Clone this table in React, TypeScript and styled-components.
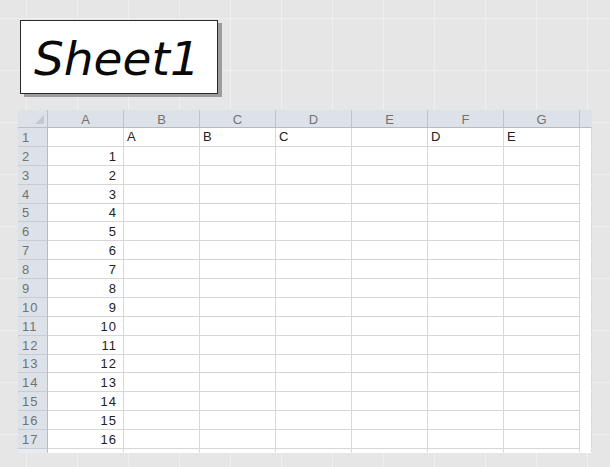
import React from 'react';
import styled, { createGlobalStyle } from 'styled-components';

const GlobalStyle = createGlobalStyle`
    html, body {
        margin: 0;
        padding: 0;
    }

    body {
        width: 610px;
        height: 467px;
        overflow: hidden;
        background-color: #e6e6e6;
        // faint desktop grid behind the sheet
        background-image:
            linear-gradient(to right, #efefef 1px, transparent 1px),
            linear-gradient(to bottom, #efefef 1px, transparent 1px);
        background-size: 51px 52px;
        background-position: 26px 18px;
        font-family: 'Liberation Sans', Arial, sans-serif;
    }
`;

const COLUMNS = ['A', 'B', 'C', 'D', 'E', 'F', 'G'];
const ROW_COUNT = 17;

// row 1 holds the letters, column A holds the numbers
const cellValue = (row: number, col: number) => {
    if (row === 1) {
        return ['', 'A', 'B', 'C', '', 'D', 'E'][col];
    }
    if (col === 0) {
        return String(row - 1);
    }
    return '';
};

export default function App() {
    return (
        <>
            <GlobalStyle />
            <Page>
                <TitleBox>
                    <TitleText>Sheet1</TitleText>
                </TitleBox>
                <Sheet>
                    <CornerCell>
                        <CornerMark />
                    </CornerCell>
                    {COLUMNS.map((c) => (
                        <ColumnHeader key={c}>{c}</ColumnHeader>
                    ))}
                    <ColumnHeader $partial />

                    {Array.from({ length: ROW_COUNT }, (_, i) => i + 1).map((row) => (
                        <React.Fragment key={row}>
                            <RowHeader>{row}</RowHeader>
                            {COLUMNS.map((c, col) => (
                                <Cell key={c} $numeric={col === 0 && row > 1}>
                                    {cellValue(row, col)}
                                </Cell>
                            ))}
                            <Cell $partial />
                        </React.Fragment>
                    ))}

                    <RowHeader $partial />
                    {COLUMNS.map((c) => (
                        <Cell key={c} $partial />
                    ))}
                    <Cell $partial />
                </Sheet>
            </Page>
        </>
    );
}

const Page = styled.div`
    padding: 20px 0 0 18px;
`;

const TitleBox = styled.div`
    margin-left: 2px;
    width: 198px;
    height: 74px;
    box-sizing: border-box;
    border: 1px solid #2a2a2a;
    background: #fff;
    box-shadow: 4px 3px 0 #9c9c9c;
    display: flex;
    align-items: center;
    padding-left: 13px;
`;

const TitleText = styled.span`
    font-family: 'DejaVu Sans', Verdana, sans-serif;
    font-style: italic;
    font-size: 47px;
    color: #0a0a0a;
    line-height: 1;
    padding-top: 2px;
`;

const Sheet = styled.div`
    margin-top: 16px;
    display: grid;
    grid-template-columns: 30px repeat(7, 76px) 12px;
    grid-template-rows: 18px repeat(17, 18.88px) 4px;
    width: max-content;
    font-size: 13px;
`;

const HeaderBase = styled.div`
    box-sizing: border-box;
    background: #dde2e8;
    color: #727272;
    font-size: 13px;
    line-height: 1;
`;

const CornerCell = styled(HeaderBase)`
    position: relative;
    border-right: 1px solid #b9c0c9;
    border-bottom: 1px solid #b9c0c9;
`;

const CornerMark = styled.div`
    position: absolute;
    right: 3px;
    bottom: 3px;
    width: 0;
    height: 0;
    border-left: 9px solid transparent;
    border-bottom: 9px solid #c3c8cf;
`;

const ColumnHeader = styled(HeaderBase)<{ $partial?: boolean }>`
    display: flex;
    align-items: center;
    justify-content: center;
    border-right: 1px solid ${(p) => (p.$partial ? 'transparent' : '#bcc3cc')};
    border-bottom: 1px solid #b4bbc4;
    padding-top: 2px;
`;

const RowHeader = styled(HeaderBase)<{ $partial?: boolean }>`
    display: flex;
    align-items: flex-end;
    padding: 0 0 2px 4px;
    letter-spacing: 1px;
    border-right: 1px solid #b4bbc4;
    border-bottom: 1px solid ${(p) => (p.$partial ? 'transparent' : '#c6ccd4')};
    background: ${(p) => (p.$partial ? '#e8ebef' : '#dde2e8')};
`;

const Cell = styled.div<{ $numeric?: boolean; $partial?: boolean }>`
    box-sizing: border-box;
    background: #fff;
    color: #222;
    line-height: 1;
    display: flex;
    align-items: flex-end;
    justify-content: ${(p) => (p.$numeric ? 'flex-end' : 'flex-start')};
    padding: ${(p) => (p.$numeric ? '0 6px 2px 0' : '0 0 3px 3px')};
    letter-spacing: ${(p) => (p.$numeric ? '1px' : '0')};
    border-right: 1px solid #d9d9d9;
    border-bottom: 1px solid ${(p) => (p.$partial ? 'transparent' : '#d6d6d6')};
    overflow: hidden;
`;
